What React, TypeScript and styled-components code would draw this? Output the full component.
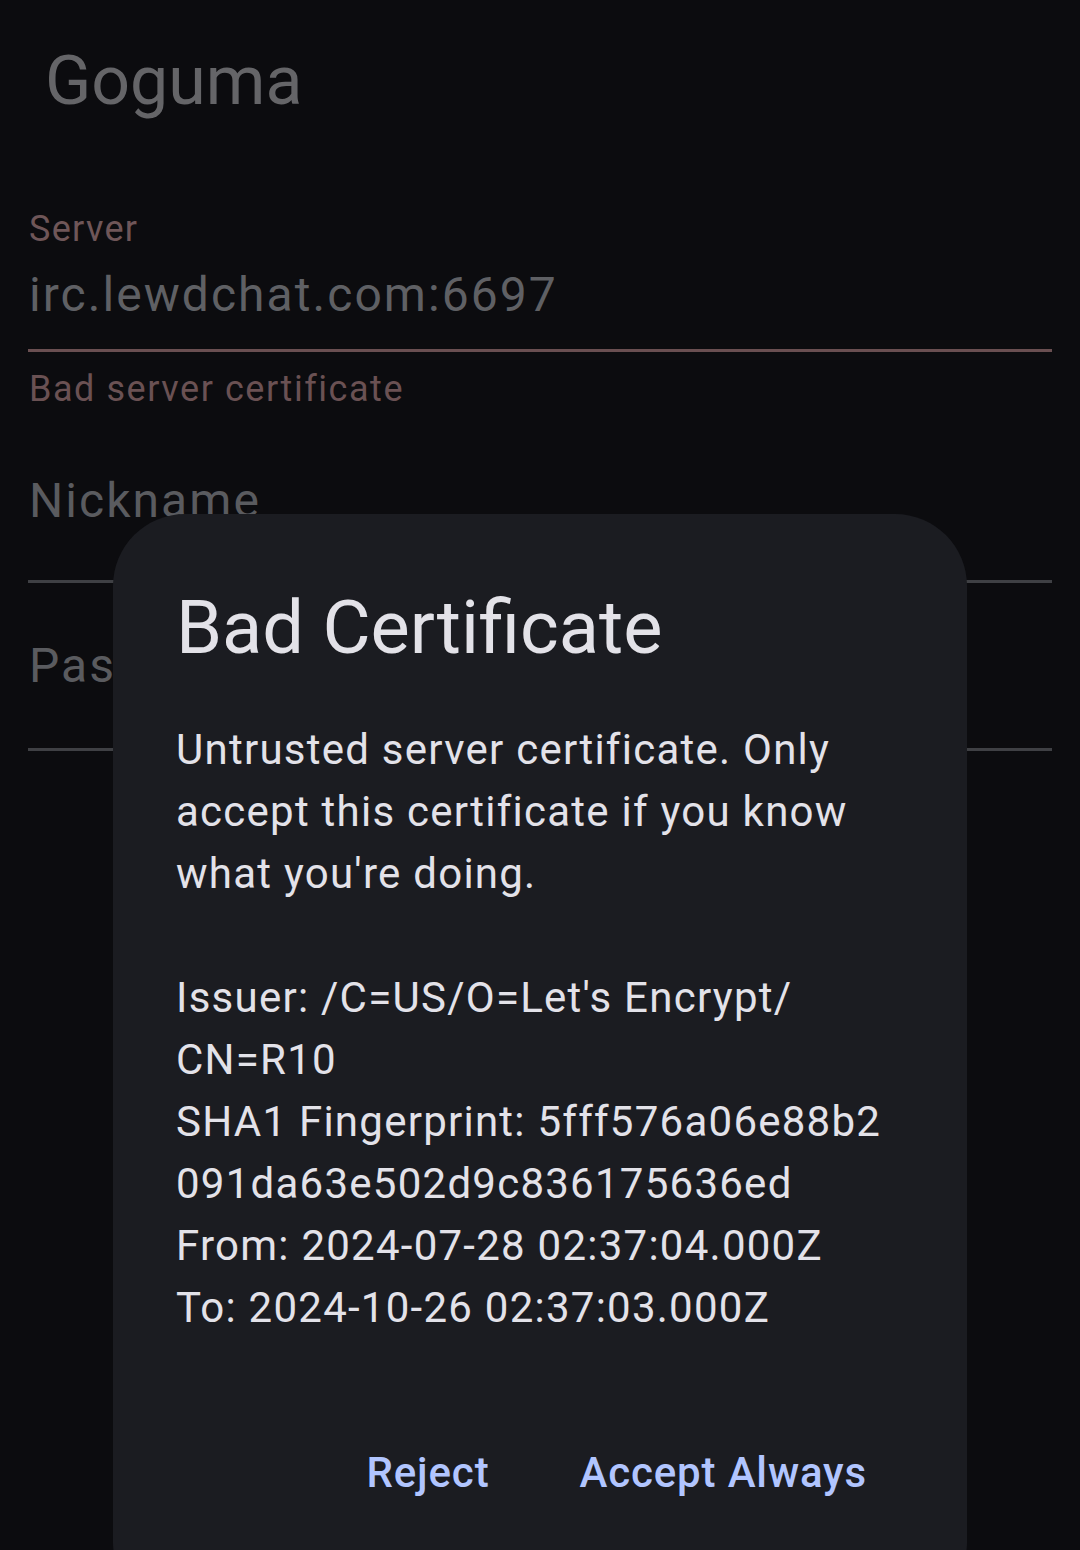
import React from "react";
import styled, { createGlobalStyle } from "styled-components";

const Global = createGlobalStyle`
  html, body {
    margin: 0;
    padding: 0;
    background: #0c0c0f;
  }
  body {
    font-family: Roboto, "Noto Sans", "Liberation Sans", sans-serif;
    -webkit-font-smoothing: antialiased;
  }
`;

const Screen = styled.div`
  position: relative;
  width: 1080px;
  height: 1550px;
  overflow: hidden;
  background: #0c0c0f;
`;

const AppBar = styled.header`
  padding: 41px 0 0 45px;
  height: 80px;
`;

const AppTitle = styled.h1`
  margin: 0;
  font-size: 68px;
  line-height: 80px;
  font-weight: 400;
  color: #656568;
`;

const Form = styled.div`
  display: flex;
  flex-direction: column;
  padding: 86px 28px 0 28px;
`;

const Field = styled.div<{ $top?: number }>`
  display: flex;
  flex-direction: column;
  margin-top: ${(p) => p.$top ?? 0}px;
`;

const Label = styled.div`
  padding-left: 1px;
  font-size: 36px;
  line-height: 44px;
  letter-spacing: 1.3px;
  color: #6f5658;
  margin-bottom: 14px;
`;

const InputText = styled.div<{ $placeholder?: boolean }>`
  padding-left: 1px;
  font-size: 48px;
  line-height: 60px;
  letter-spacing: 2.05px;
  color: ${(p) => (p.$placeholder ? "#5a5b5f" : "#5f6064")};
`;

const Underline = styled.div<{ $error?: boolean; $gap: number }>`
  margin-top: ${(p) => p.$gap}px;
  height: 3px;
  background: ${(p) => (p.$error ? "#6a4f51" : "#3f4044")};
`;

const Helper = styled.div`
  padding-left: 1px;
  margin-top: 15px;
  font-size: 36px;
  line-height: 44px;
  letter-spacing: 1.55px;
  color: #6a5153;
`;

const Dialog = styled.div`
  position: absolute;
  top: 514px;
  left: 113px;
  width: 854px;
  height: 1100px;
  box-sizing: border-box;
  padding: 70px 64px 0 63px;
  background: #1b1c21;
  border-radius: 72px;
  display: flex;
  flex-direction: column;
`;

const DialogTitle = styled.h2`
  margin: 0;
  font-size: 74px;
  line-height: 88px;
  font-weight: 400;
  color: #e3e2e8;
`;

const DialogBody = styled.div`
  margin-top: 47px;
  font-size: 42px;
  line-height: 62px;
  letter-spacing: 1.25px;
  color: #e3e2e9;
`;

const Line = styled.div`
  min-height: 62px;
  white-space: nowrap;
`;

const Actions = styled.div`
  margin-top: 104px;
  display: flex;
  justify-content: flex-end;
  gap: 18px;
`;

const TextButton = styled.button`
  border: none;
  background: transparent;
  padding: 0 36px;
  margin: 0;
  font-family: Roboto, "Noto Sans", "Liberation Sans", sans-serif;
  font-size: 42px;
  line-height: 60px;
  font-weight: 500;
  letter-spacing: 0.85px;
  color: #b1c5ff;
  cursor: pointer;
`;

const bodyLines = [
  "Untrusted server certificate. Only",
  "accept this certificate if you know",
  "what you're doing.",
  "",
  "Issuer: /C=US/O=Let's Encrypt/",
  "CN=R10",
  "SHA1 Fingerprint: 5fff576a06e88b2",
  "091da63e502d9c836175636ed",
  "From: 2024-07-28 02:37:04.000Z",
  "To: 2024-10-26 02:37:03.000Z",
];

export default function App() {
  return (
    <Screen>
      <Global />
      <AppBar>
        <AppTitle>Goguma</AppTitle>
      </AppBar>
      <Form>
        <Field>
          <Label>Server</Label>
          <InputText>irc.lewdchat.com:6697</InputText>
          <Underline $error $gap={24} />
          <Helper>Bad server certificate</Helper>
        </Field>
        <Field $top={60}>
          <InputText $placeholder>Nickname</InputText>
          <Underline $gap={49} />
        </Field>
        <Field $top={53}>
          <InputText $placeholder>Password</InputText>
          <Underline $gap={52} />
        </Field>
      </Form>
      <Dialog role="dialog">
        <DialogTitle>Bad Certificate</DialogTitle>
        <DialogBody>
          {bodyLines.map((l, i) => (
            <Line key={i}>{l}</Line>
          ))}
        </DialogBody>
        <Actions>
          <TextButton>Reject</TextButton>
          <TextButton>Accept Always</TextButton>
        </Actions>
      </Dialog>
    </Screen>
  );
}
